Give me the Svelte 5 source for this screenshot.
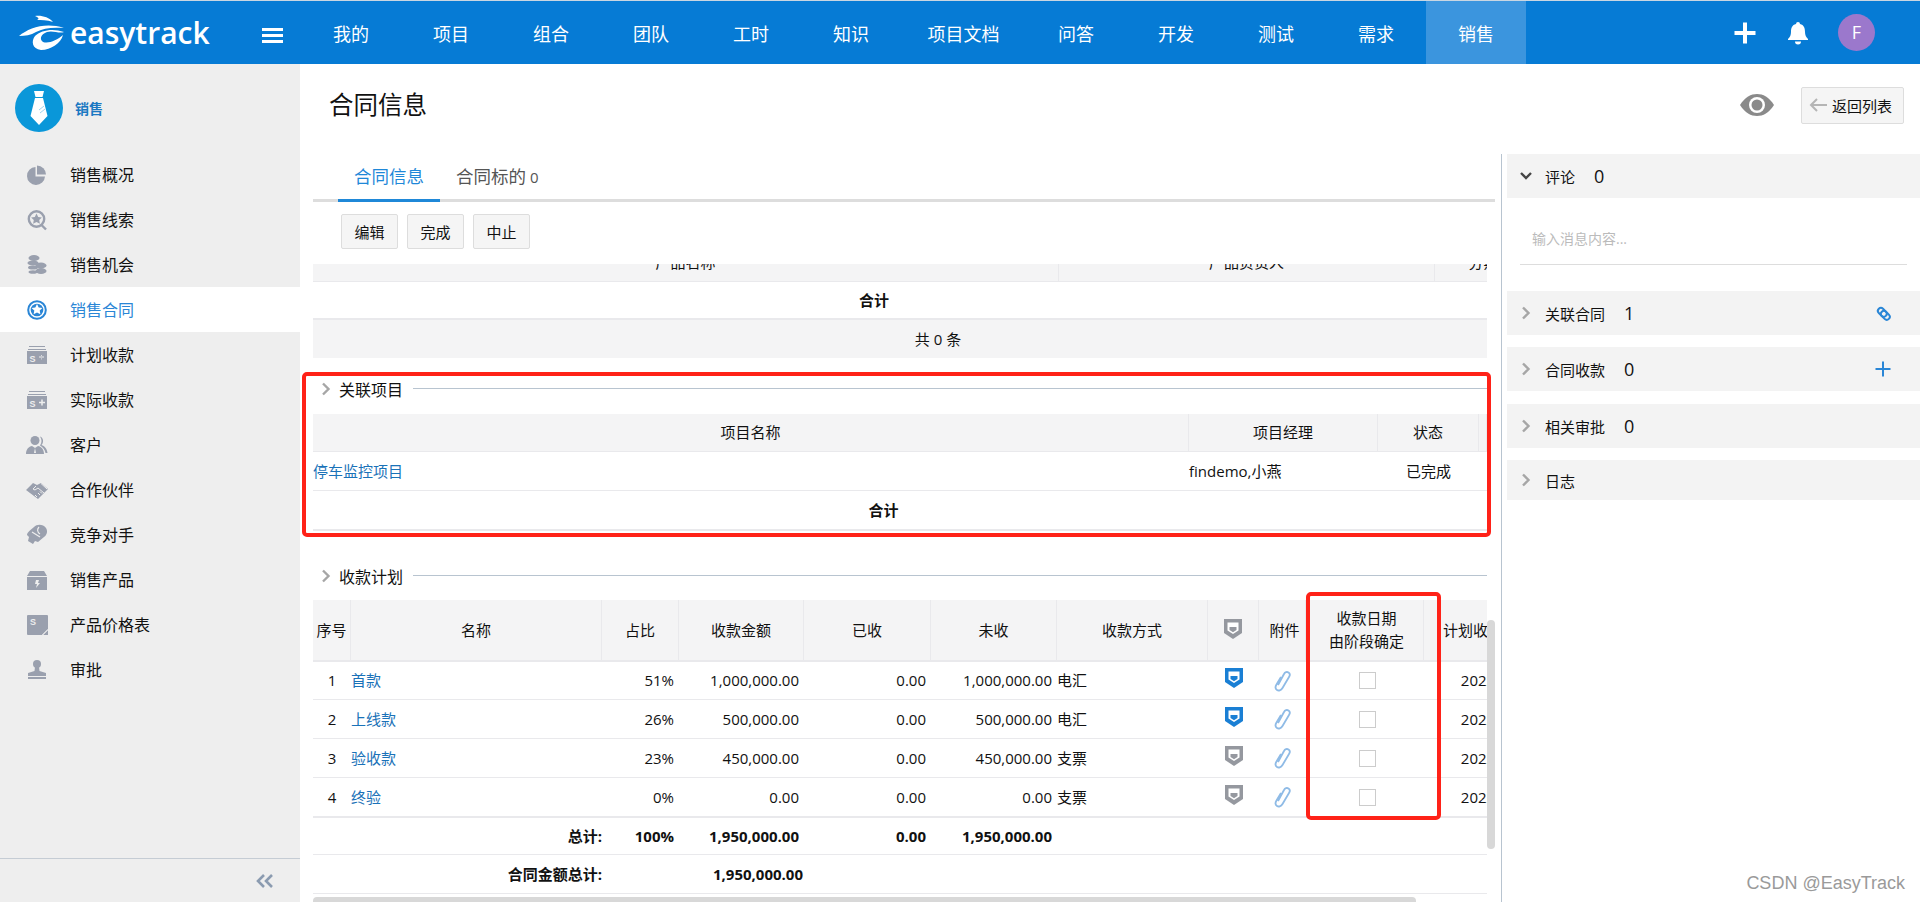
<script>
  const navItems = ["我的", "项目", "组合", "团队", "工时", "知识", "项目文档", "问答", "开发", "测试", "需求", "销售"];

  const star = "M11 5.500l1.700 3.400 3.700.5-2.700 2.600.7 3.700-3.400-1.800-3.400 1.800.7-3.700-2.700-2.600 3.700-.5z";
  const sideItems = [
    { label: "销售概况", icon: `<path d="M9.500 3a9 9 0 1 0 9.500 9.500H9.500z"/><path d="M11 1.500a9 9 0 0 1 9 9h-9z"/>` },
    { label: "销售线索", icon: `<circle cx="10.500" cy="10" r="7.700" fill="none" stroke="currentColor" stroke-width="2.400"/><path d="${star}" transform="translate(-.5 -1)"/><path d="M15.500 16l4.500 4.500" stroke="currentColor" stroke-width="2.400" fill="none"/>` },
    { label: "销售机会", icon: `<ellipse cx="8" cy="4" rx="5.500" ry="3"/><ellipse cx="7" cy="9" rx="5.500" ry="2.500"/><ellipse cx="7" cy="13.500" rx="5" ry="2"/><ellipse cx="15" cy="11.500" rx="5.500" ry="3"/><ellipse cx="15" cy="17" rx="5.500" ry="3"/><ellipse cx="7" cy="18" rx="4.500" ry="1.800"/>` },
    { label: "销售合同", active: true, icon: `<circle cx="11" cy="11" r="8.800" fill="none" stroke="currentColor" stroke-width="2"/><circle cx="11" cy="11" r="6.300" /><path d="${star}" fill="#fff" transform="translate(0 -.5)"/>` },
    { label: "计划收款", icon: `<path d="M3 2h16v1H3zM2 5h18v1H2z"/><rect x="1" y="7" width="20" height="13"/><text x="3.500" y="17.500" class="glyph">S</text><path d="M13 13h5M15.500 11v.8M15.500 14.500v.8" stroke="#eee" fill="none"/>` },
    { label: "实际收款", icon: `<path d="M3 2h16v1H3zM2 5h18v1H2z"/><rect x="1" y="7" width="20" height="13"/><text x="3.500" y="17.500" class="glyph">S</text><path d="M13 13.500h6M16 10.500v6" stroke="#eee" stroke-width="1.500" fill="none"/>` },
    { label: "客户", icon: `<circle cx="9" cy="6.500" r="4.500"/><path d="M0 20c0-5 3-7.500 6-8l3 2 3-2c3 .5 6 3 6 8z"/><path d="M14 2.500c3.500 1 4 6 1.500 8.500 3 1 5.500 3.500 6 8h-2c-.5-3-2.500-6-5.500-7.500 2-3 2-6 0-9z"/><path d="M9 14l-1 5h2z" fill="#eee"/>` },
    { label: "合作伙伴", icon: `<path d="M0 11l7-7 4 2 4-2 7 6-10 10z"/><path d="M10 7l-3 3 2 1 3-2 6 5M11 18l-2-2M14 16l-2-2M16 14.500l-2-2M15 4.500l6 5.500" fill="none" stroke="#eee"/>` },
    { label: "竞争对手", icon: `<path d="M8 3c3-3 9-3 12 1 2 3 1 7-2 9l-6 5-3-1-2 3-5-3 1-4-2-2c0-3 4-5 7-8z"/><path d="M6 8l8 5M13 3c-2 2-2 5 1 7" fill="none" stroke="#eee" stroke-width="1.200"/>` },
    { label: "销售产品", icon: `<path d="M4 2h14l3 5H1z"/><rect x="1" y="8" width="20" height="13"/><path d="M10 11h3l-1 3h2l-4 5 1-4H9z" fill="#eee"/>` },
    { label: "产品价格表", icon: `<path d="M2 1h19a1 1 0 0 1 1 1v13l-6 6H2a1 1 0 0 1-1-1V2a1 1 0 0 1 1-1z"/><path d="M22 16v5h-5z"/><path d="M16.500 21l5.500-5.500" stroke="#eee" fill="none"/><text x="4" y="11" class="glyph">S</text>` },
    { label: "审批", icon: `<circle cx="11" cy="5" r="4"/><path d="M9 8h4l.5 4 6.500 2v3H2v-3l6.500-2z"/><rect x="2" y="18" width="18" height="2"/>` }
  ];

  const panels = [
    { label: "关联合同", count: "1", action: "link" },
    { label: "合同收款", count: "0", action: "plus" },
    { label: "相关审批", count: "0", loose: true },
    { label: "日志", short: true }
  ];

  const plans = [
    { no: 1, name: "首款", ratio: "51%", total: "1,000,000.00", paid: "0.00", unpaid: "1,000,000.00", way: "电汇", on: true },
    { no: 2, name: "上线款", ratio: "26%", total: "500,000.00", paid: "0.00", unpaid: "500,000.00", way: "电汇", on: true },
    { no: 3, name: "验收款", ratio: "23%", total: "450,000.00", paid: "0.00", unpaid: "450,000.00", way: "支票", on: false },
    { no: 4, name: "终验", ratio: "0%", total: "0.00", paid: "0.00", unpaid: "0.00", way: "支票", on: false }
  ];
</script>

{#snippet shield(color, core)}
  <svg class="shield" width="18" height="20" viewBox="0 0 18 20">
    <path d="M0 0h18v14l-9 6-9-6z" fill={color} />
    <path d="M3.500 3.500h11v8l-5.500 3.500-5.500-3.500z" fill="#fff" />
    <path d="M5.500 8h7v3l-3.500 2.200-3.500-2.200z" fill={core} />
  </svg>
{/snippet}

{#snippet chevron()}
  <svg class="chev" width="10" height="14" viewBox="0 0 10 14">
    <path d="M2 1.500l5.500 5.500-5.500 5.500" fill="none" stroke="#a6a6a6" stroke-width="2.400" />
  </svg>
{/snippet}

<div class="page">
  <header class="topbar">
    <div class="logo">
      <svg width="46" height="36" viewBox="0 0 46 36" fill="#fff">
        <path d="M16 1c6-1 14 1 18 6-6-2-12-2-16-2 3-1 1-3-2-4z" />
        <path d="M0 21c10-8 26-14 45-8-11-1-21 0-28 4-5 3-11 4-17 4z" />
        <path d="M45 17c-5 2-11-2-17 0-6 2-8 7-4 10 6 2 14-2 20-7-2 8-12 15-22 15-9-1-10-9-6-14 6-6 18-8 29-4z" />
      </svg>
      <span class="wordmark">easytrack</span>
    </div>
    <div class="burger"><i></i><i></i><i></i></div>
    <nav class="nav">
      {#each navItems as item}
        <a class:wide={item.length > 2} class:current={item === "销售"}>{item}</a>
      {/each}
    </nav>
    <div class="top-tools">
      <svg width="24" height="24" viewBox="0 0 24 24"><path d="M12 1.500v21M1.500 12h21" stroke="#fff" stroke-width="4" /></svg>
      <svg width="22" height="24" viewBox="0 0 22 24" fill="#fff">
        <path d="M11 1a2 2 0 0 1 2 2c4 1 5 4 5 8 0 3 1 5 3 7v1H1v-1c2-2 3-4 3-7 0-4 1-7 5-8a2 2 0 0 1 2-2z" />
        <path d="M8 20.500h6a3 3 0 0 1-6 0z" />
      </svg>
      <div class="avatar">F</div>
    </div>
  </header>

  <div class="body">
    <aside class="side">
      <div class="side-head">
        <svg width="48" height="48" viewBox="0 0 48 48">
          <circle cx="24" cy="24" r="24" fill="#0a97d9" />
          <path d="M19 7h10l-1.500 6h-7zM20 14h8l4.500 18-8.500 9-8.500-9z" fill="#fff" />
          <path d="M24 26l5-4M25 29l5-4" stroke="#9fd4ef" fill="none" />
        </svg>
        <span>销售</span>
      </div>
      <ul class="menu">
        {#each sideItems as item}
          <li class:active={item.active}>
            <svg width="22" height="22" viewBox="0 0 22 22" fill="currentColor">{@html item.icon}</svg>
            <span>{item.label}</span>
          </li>
        {/each}
      </ul>
      <div class="side-foot">
        <svg width="18" height="14" viewBox="0 0 18 14">
          <path d="M8 1L2 7l6 6M16 1l-6 6 6 6" fill="none" stroke="#8b9bb0" stroke-width="2.600" />
        </svg>
      </div>
    </aside>

    <main class="main">
      <div class="title-bar">
        <h1>合同信息</h1>
        <div class="title-tools">
          <svg width="34" height="22" viewBox="0 0 34 22">
            <path d="M0 11C5 3 11 0 17 0s12 3 17 11c-5 8-11 11-17 11S5 19 0 11z" fill="#8a8a8a" />
            <circle cx="17" cy="11" r="8" fill="#fff" />
            <circle cx="17" cy="11" r="5.500" fill="#8a8a8a" />
          </svg>
          <button class="btn back">
            <svg width="18" height="14" viewBox="0 0 18 14">
              <path d="M8 1L2 7l6 6M2 7h16" fill="none" stroke="#b5b5b5" stroke-width="2" />
            </svg>
            返回列表
          </button>
        </div>
      </div>

      <div class="split">
        <section class="left">
          <div class="tabs">
            <div class="tab on">合同信息</div>
            <div class="tab">合同标的<small>0</small></div>
          </div>
          <div class="actions">
            <button class="btn">编辑</button>
            <button class="btn">完成</button>
            <button class="btn">中止</button>
          </div>

          <div class="scroll">
            <div class="clip">
              <div class="inner">
                <table class="first">
                  <colgroup><col style="width:746px" /><col style="width:376px" /><col style="width:128px" /></colgroup>
                  <thead><tr><th>产品名称</th><th>产品负责人</th><th>分期比例</th></tr></thead>
                  <tbody>
                    <tr class="sum"><td colspan="2">合计</td><td></td></tr>
                    <tr class="pager"><td colspan="3">共 0 条</td></tr>
                  </tbody>
                </table>

                <div class="sec-title first-sec">
                  {@render chevron()}<span>关联项目</span><i></i>
                </div>
                <table class="projects">
                  <colgroup><col style="width:876px" /><col style="width:189px" /><col style="width:101px" /><col style="width:8px" /></colgroup>
                  <thead><tr><th>项目名称</th><th>项目经理</th><th>状态</th><th></th></tr></thead>
                  <tbody>
                    <tr><td class="link">停车监控项目</td><td>findemo,小燕</td><td class="c">已完成</td><td></td></tr>
                    <tr class="sum"><td colspan="3" class="sum-label">合计</td><td></td></tr>
                  </tbody>
                </table>

                <div class="sec-title second-sec">
                  {@render chevron()}<span>收款计划</span><i></i>
                </div>
                <table class="plans">
                  <colgroup>
                    <col style="width:38px" /><col style="width:251px" /><col style="width:77px" /><col style="width:125px" />
                    <col style="width:127px" /><col style="width:126px" /><col style="width:151px" /><col style="width:51px" />
                    <col style="width:47px" /><col style="width:118px" /><col style="width:152px" />
                  </colgroup>
                  <thead>
                    <tr>
                      <th>序号</th><th>名称</th><th>占比</th><th>收款金额</th><th>已收</th><th>未收</th><th>收款方式</th>
                      <th class="shield-head">{@render shield("#95989f", "#95989f")}</th>
                      <th class="attach-head">附件</th>
                      <th class="two-line">收款日期<br />由阶段确定</th>
                      <th class="plan-date">计划收款日期</th>
                    </tr>
                  </thead>
                  <tbody>
                    {#each plans as p}
                      <tr>
                        <td class="c num">{p.no}</td>
                        <td class="link">{p.name}</td>
                        <td class="r num">{p.ratio}</td>
                        <td class="r num">{p.total}</td>
                        <td class="r num">{p.paid}</td>
                        <td class="r num">{p.unpaid}</td>
                        <td>{p.way}</td>
                        <td class="c icon-cell">{@render shield(p.on ? "#1a7fd4" : "#95989f", p.on ? "#1a7fd4" : "#95989f")}</td>
                        <td class="c icon-cell">
                          <svg width="18" height="22" viewBox="0 0 18 22">
                            <path d="M5 15l6-11c1-2 3-2.500 4.500-1.500s1.500 3 .5 4.500L9.500 18c-1.500 2.500-4 3-5.500 2s-2-3-.5-5.500L8 7" fill="none" stroke="#8fbbe6" stroke-width="1.800" transform="translate(-1 0)" />
                          </svg>
                        </td>
                        <td class="c check-cell"><span class="check"></span></td>
                        <td class="c num">2022-01-01</td>
                      </tr>
                    {/each}
                    <tr class="total">
                      <td colspan="2" class="r flush">总计:</td>
                      <td class="r num">100%</td>
                      <td class="r num">1,950,000.00</td>
                      <td class="r num">0.00</td>
                      <td class="r num">1,950,000.00</td>
                      <td colspan="5"></td>
                    </tr>
                    <tr class="total">
                      <td colspan="2" class="r flush">合同金额总计:</td>
                      <td></td>
                      <td class="r num flush-num">1,950,000.00</td>
                      <td colspan="7"></td>
                    </tr>
                  </tbody>
                </table>
              </div>
              <div class="hbar"></div>
            </div>
            <div class="vbar"></div>
            <div class="mark mark-projects"></div>
            <div class="mark mark-dates"></div>
          </div>
        </section>

        <section class="right">
          <div class="panel-row">
            <svg class="chev" width="12" height="10" viewBox="0 0 12 10">
              <path d="M1 2l5 5 5-5" fill="none" stroke="#444" stroke-width="2.400" />
            </svg>
            <span class="p-label">评论</span><span class="p-count">0</span>
          </div>
          <div class="comment"><span>输入消息内容...</span></div>
          {#each panels as p}
            <div class="panel-row" class:loose={p.loose} class:short={p.short}>
              {@render chevron()}
              <span class="p-label">{p.label}</span>
              {#if p.count}<span class="p-count">{p.count}</span>{/if}
              {#if p.action === "link"}
                <svg class="p-action" width="18" height="18" viewBox="0 0 18 18" fill="none" stroke="#2a86d6" stroke-width="2">
                  <rect x="-1" y="-3" width="10" height="6" rx="3" transform="translate(5.500 5.500) rotate(45)" />
                  <rect x="-1" y="-3" width="10" height="6" rx="3" transform="translate(8.500 8.500) rotate(45)" />
                </svg>
              {:else if p.action === "plus"}
                <svg class="p-action" width="18" height="18" viewBox="0 0 18 18">
                  <path d="M9 1.500v15M1.500 9h15" stroke="#2a86d6" stroke-width="2" />
                </svg>
              {/if}
            </div>
          {/each}
        </section>
      </div>
    </main>
  </div>

  <div class="watermark">CSDN @EasyTrack</div>
</div>

<style>
  :global(body) {
    margin: 0;
    background: #fff;
  }

  .page {
    position: relative;
    height: 902px;
    overflow: hidden;
    font-family: "Open Sans", "Noto Sans CJK SC", sans-serif;
    color: #111;
  }

  .topbar {
    display: flex;
    align-items: center;
    height: 63px;
    border-top: 1px solid #c9d6e2;
    background: #067bd5;
    color: #fff;
  }

  .logo {
    display: flex;
    align-items: center;
    gap: 5px;
    width: 231px;
    padding-left: 19px;
    box-sizing: border-box;
  }

  .wordmark {
    font-family: "Open Sans", sans-serif;
    font-size: 30px;
    font-weight: 600;
    line-height: 36px;
  }

  .burger {
    display: flex;
    flex-direction: column;
    gap: 3px;
    width: 21px;
    margin: 6px 18px 0 31px;
  }

  .burger i {
    height: 3px;
    background: #fff;
  }

  .nav {
    display: flex;
    height: 100%;
  }

  .nav a {
    display: flex;
    align-items: center;
    padding: 0 32px;
    font-size: 18px;
  }

  .nav a.wide {
    padding: 0 26.500px;
  }

  .nav a.current {
    background: #3b95de;
  }

  .top-tools {
    display: flex;
    align-items: center;
    margin-left: auto;
    padding-right: 45px;
  }

  .top-tools svg:first-child {
    margin-right: 30px;
  }

  .top-tools svg:nth-child(2) {
    margin-right: 29px;
  }

  .avatar {
    width: 37px;
    height: 37px;
    border-radius: 50%;
    background: #9b78cc;
    font-size: 18px;
    line-height: 37px;
    text-align: center;
  }

  .body {
    display: flex;
    height: 838px;
  }

  .side {
    display: flex;
    flex-direction: column;
    width: 300px;
    flex: none;
    background: #eee;
  }

  .side-head {
    display: flex;
    align-items: center;
    gap: 12px;
    height: 88px;
    padding-left: 15px;
    font-size: 14px;
    font-weight: 700;
    color: #1a78c2;
  }

  .menu {
    flex: 1;
    margin: 0;
    padding: 0;
    list-style: none;
  }

  .menu li {
    display: flex;
    align-items: center;
    height: 45px;
    padding-left: 26px;
    font-size: 16px;
    color: #9aa0ae;
  }

  .menu li span {
    margin-left: 22px;
    padding-bottom: 2px;
    color: #111;
  }

  .menu li.active {
    background: #fff;
    color: #2a86d6;
  }

  .menu li.active span {
    color: #2a86d6;
  }

  .menu :global(.glyph) {
    font-family: "Liberation Sans", sans-serif;
    font-size: 9px;
    font-weight: 700;
    fill: #eee;
  }

  .side-foot {
    display: flex;
    align-items: center;
    justify-content: flex-end;
    height: 43px;
    padding-right: 26px;
    border-top: 1px solid #c5ccd4;
  }

  .main {
    flex: 1;
    min-width: 0;
  }

  .title-bar {
    display: flex;
    align-items: center;
    justify-content: space-between;
    height: 90px;
    padding: 0 16px 8px 29px;
    box-sizing: border-box;
  }

  h1 {
    margin: -4px 0 0;
    font-size: 24.500px;
    font-weight: 400;
    color: #111;
  }

  .title-tools {
    display: flex;
    align-items: center;
    gap: 27px;
  }

  .btn {
    height: 35px;
    padding: 0 12.500px;
    border: 1px solid #ddd;
    border-radius: 2px;
    background: #f5f5f5;
    font: inherit;
    font-size: 15px;
    color: #111;
  }

  .btn.back {
    display: flex;
    align-items: center;
    gap: 5px;
    height: 37px;
    padding: 0 11px 0 7px;
  }

  .split {
    display: flex;
    height: 748px;
  }

  .left {
    width: 1201px;
    padding: 0 6px 0 13px;
    box-sizing: border-box;
    flex: none;
  }

  .tabs {
    display: flex;
    height: 45px;
    padding-left: 25px;
    border-bottom: 3px solid #ddd;
  }

  .tab {
    height: 45px;
    padding: 0 16px;
    border-bottom: 3px solid transparent;
    font-size: 17.500px;
    line-height: 44px;
    color: #555;
  }

  .tab.on {
    border-bottom-color: #1f88d8;
    color: #1f88d8;
  }

  .tab small {
    margin-left: 4px;
    font-size: 15px;
  }

  .actions {
    display: flex;
    gap: 9px;
    padding: 12px 0 15px 28px;
  }

  .scroll {
    position: relative;
    height: 638px;
  }

  .clip {
    width: 1174px;
    height: 638px;
    overflow: hidden;
  }

  .inner {
    margin-top: -20px;
  }

  table {
    border-collapse: separate;
    border-spacing: 0;
    table-layout: fixed;
    width: 1250px;
    font-size: 15px;
  }

  .projects {
    width: 1174px;
  }

  .plans {
    width: 1263px;
  }

  th {
    height: 37px;
    padding: 0;
    border-right: 1px solid #e9e9ec;
    border-bottom: 1px solid #e9e9ec;
    background: #f4f4f5;
    font-weight: 400;
    line-height: 1;
    white-space: nowrap;
    overflow: hidden;
  }

  td {
    height: 38px;
    padding: 0;
    border-bottom: 1px solid #e9e9ec;
    line-height: 1;
    white-space: nowrap;
  }

  .c {
    text-align: center;
  }

  .r {
    padding-right: 5px;
    text-align: right;
  }

  .num {
    font-size: 15px;
  }

  .link {
    color: #1a72b8;
  }

  .first tbody .sum td {
    height: 36px;
    border-bottom-width: 2px;
    font-weight: 700;
    text-align: center;
  }

  .sum td {
    border-bottom: 2px solid #e9e9ec;
    font-weight: 700;
    text-align: center;
  }

  .pager td {
    height: 38px;
    border: 0;
    background: #f4f4f5;
    text-align: center;
  }

  .sec-title {
    display: flex;
    align-items: center;
    height: 24px;
    font-size: 16px;
  }

  .first-sec {
    margin: 19px 0 13px;
  }

  .second-sec {
    margin: 33px 0 12px;
  }

  .sec-title .chev {
    margin-left: 8px;
  }

  .sec-title span {
    margin-left: 8px;
  }

  .sec-title i {
    flex: 1;
    height: 1px;
    margin: -1px 0 0 10px;
    background: #b8c4d0;
  }

  .projects td.sum-label {
    height: 37px;
    padding-right: 25px;
  }

  .plans th {
    height: 60px;
    border-bottom-width: 2px;
  }

  .plans td {
    height: 38px;
  }

  .plans tbody tr:first-child td {
    height: 37px;
  }

  .plans tbody tr:nth-child(4) td {
    height: 38px;
    border-bottom-width: 2px;
  }

  .plans .total td {
    height: 36px;
    font-weight: 700;
  }

  .plans .total:last-child td {
    height: 38px;
  }

  .plans td.flush {
    padding-right: 0;
  }

  .plans td.flush-num {
    padding-right: 1px;
  }

  .shield-head .shield {
    margin-top: -3px;
  }

  .shield {
    display: block;
    margin: -5px auto 0;
  }

  .icon-cell svg {
    vertical-align: middle;
  }

  .attach-head {
    padding-left: 5px;
  }

  .two-line {
    padding-left: 4px;
    line-height: 23px;
  }

  .check-cell {
    padding-left: 4px;
  }

  .plan-date {
    text-align: left;
    padding-left: 19px;
  }

  .check {
    display: inline-block;
    width: 15px;
    height: 15px;
    border: 1px solid #ccc;
    vertical-align: middle;
  }

  .hbar {
    width: 1103px;
    height: 8px;
    margin-top: 3px;
    border-radius: 4px;
    background: #d8d8d8;
  }

  .vbar {
    position: absolute;
    left: 1174px;
    top: 356px;
    width: 8px;
    height: 229px;
    border-radius: 4px;
    background: #d8d8d8;
  }

  .mark {
    position: absolute;
    box-sizing: border-box;
    border: 4px solid #ff2218;
    border-radius: 5px;
  }

  .mark-projects {
    left: -11px;
    top: 108px;
    width: 1189px;
    height: 165px;
  }

  .mark-dates {
    left: 993px;
    top: 328px;
    width: 135px;
    height: 228px;
  }

  .right {
    flex: 1;
    min-width: 0;
    padding-left: 5px;
    border-left: 1px solid #b8c4d0;
  }

  .panel-row {
    display: flex;
    align-items: center;
    height: 44px;
    margin-top: 12px;
    padding: 0 28px 0 13px;
    background: #f3f3f3;
    font-size: 15px;
  }

  .panel-row:first-child {
    margin-top: 0;
  }

  .panel-row.loose {
    margin-top: 13px;
  }

  .panel-row.short {
    height: 40px;
  }

  .panel-row .chev {
    width: 12px;
    flex: none;
  }

  .p-label {
    margin-left: 13px;
  }

  .p-count {
    margin-left: 19px;
    font-size: 18px;
  }

  .p-action {
    margin-left: auto;
  }

  .comment {
    height: 67px;
    margin: 0 13px;
    padding: 27px 0 0 12px;
    border-bottom: 1px solid #ddd;
    box-sizing: border-box;
    font-size: 14px;
    line-height: 28px;
    color: #bbb;
  }

  .comment + .panel-row {
    margin-top: 26px;
  }

  .watermark {
    position: absolute;
    right: 15px;
    bottom: 8px;
    font-family: "Liberation Sans", sans-serif;
    font-size: 18px;
    color: #9a9a9a;
  }
</style>
